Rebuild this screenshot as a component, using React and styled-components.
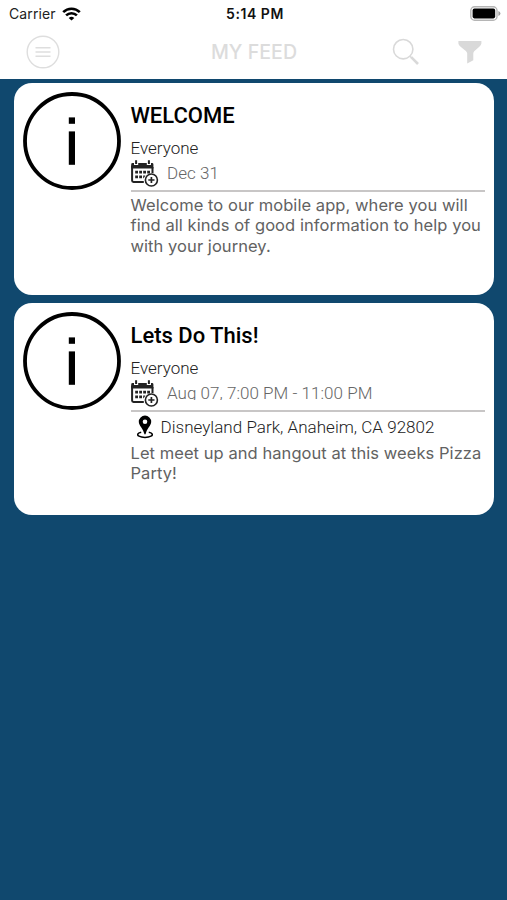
import React from "react";
import styled, { createGlobalStyle } from "styled-components";

const GlobalStyle = createGlobalStyle`
  * {
    box-sizing: border-box;
  }
  body {
    margin: 0;
    background-color: #10486e;
  }
`;

const WifiIcon = () => (
  <svg width="19" height="14" viewBox="0 0 19 14">
    <g fill="none" stroke="#000" strokeWidth="2.6">
      <path d="M1.2 5.2 A11.8 11.8 0 0 1 17.8 5.2" />
      <path d="M4.1 8.4 A7.7 7.7 0 0 1 14.9 8.4" />
    </g>
    <path d="M9.5 13.6 L6.7 10.9 A4.3 4.3 0 0 1 12.3 10.9 Z" />
  </svg>
);

const BatteryIcon = () => (
  <svg width="31" height="15" viewBox="0 0 31 15">
    <rect x="0.8" y="0.8" width="26.2" height="13.4" rx="3.8" fill="#fff" stroke="#b5b5b5" strokeWidth="1.4" />
    <rect x="2.6" y="2.6" width="22.6" height="9.8" rx="1.8" />
    <path d="M28.4 5 Q30.4 5.8 30.4 7.5 Q30.4 9.2 28.4 10 Z" fill="#9d9d9d" />
  </svg>
);

const MenuIcon = () => (
  <svg width="34" height="34" viewBox="0 0 34 34" fill="none" stroke="#dedede" strokeWidth="1.4">
    <circle cx="17" cy="17" r="15.8" />
    <path d="M9.5 12.7 H24.5 M9.5 17 H24.5 M9.5 21.3 H24.5" />
  </svg>
);

const SearchIcon = () => (
  <svg width="28" height="28" viewBox="0 0 28 28" fill="none" stroke="#d9d9d9">
    <circle cx="11.2" cy="11.2" r="9.7" strokeWidth="1.6" />
    <path d="M17.8 18 L19.5 19.7" strokeWidth="1.4" />
    <path d="M19.2 19.2 L26 26" strokeWidth="2.6" />
  </svg>
);

const FilterIcon = () => (
  <svg width="24" height="24" viewBox="0 0 24 24" fill="#d9d9d9">
    <path d="M0.4 1 H23.4 V3.6 C22.6 7.6 15.3 10.4 15.3 13.4 V20.2 L9.2 23.4 V13.4 C9.2 10.4 1.2 7.6 0.4 3.6 Z" />
  </svg>
);

const InfoIcon = () => (
  <svg width="98" height="98" viewBox="0 0 98 98">
    <circle cx="49" cy="49" r="47" fill="none" stroke="#000" strokeWidth="3.8" />
    <rect x="45.8" y="25.4" width="6.2" height="6.4" />
    <rect x="45.8" y="39.4" width="6.2" height="33.4" />
  </svg>
);

const CalendarIcon = () => (
  <svg width="28" height="29" viewBox="0 -1 28 29">
    <path d="M1.1 5.5 V20.5 Q1.1 21.9 2.5 21.9 H12.8 M21.5 7 V13" fill="none" stroke="#222" strokeWidth="2" />
    <path d="M0.2 8.4 V4.4 Q0.2 3.1 1.5 3.1 H3 V5 H7.2 V3.1 H15.8 V5 H20 V3.1 H21.1 Q22.4 3.1 22.4 4.4 V8.4 Z" fill="#222" />
    <path d="M5.1 0.2 V4 M17.9 0.2 V4" stroke="#222" strokeWidth="2" />
    <path
      d="M4.2 10.8 H7 V13.6 H4.2 Z M8.2 10.8 H11 V13.6 H8.2 Z M12.2 10.8 H15 V13.6 H12.2 Z M16.2 10.8 H19 V13.6 H16.2 Z M4.2 15.5 H7 V18.3 H4.2 Z M8.2 15.5 H11 V18.3 H8.2 Z M12.2 15.5 H14.4 L12.7 18.3 H12.2 Z"
      fill="#222"
    />
    <circle cx="20.4" cy="20" r="6" fill="#fff" stroke="#222" strokeWidth="1.6" />
    <path d="M20.4 16.9 V23.1 M17.3 20 H23.5" stroke="#222" strokeWidth="1.7" />
  </svg>
);

const PinIcon = () => (
  <svg width="16" height="24" viewBox="0 0 16 24">
    <path d="M4.2 17.2 C0 18 0 20.2 2 21.2 C5 22.8 11 22.8 14 21.2 C16 20.2 16 18 11.8 17.2" fill="none" stroke="#000" strokeWidth="1.5" />
    <path
      d="M8 0.6 A6.2 6.2 0 0 1 14.2 6.8 C14.2 10.5 9.7 14 8.8 18.6 Q8 20.4 7.2 18.6 C6.3 14 1.8 10.5 1.8 6.8 A6.2 6.2 0 0 1 8 0.6 Z M8 4.4 A2.3 2.3 0 1 0 8 9 A2.3 2.3 0 1 0 8 4.4 Z"
      fillRule="evenodd"
    />
  </svg>
);

const posts = [
  {
    title: "WELCOME",
    audience: "Everyone",
    date: "Dec 31",
    text: ["Welcome to our mobile app, where you will", "find all kinds of good information to help you", "with your journey."],
  },
  {
    title: "Lets Do This!",
    audience: "Everyone",
    date: "Aug 07, 7:00 PM - 11:00 PM",
    place: "Disneyland Park, Anaheim, CA 92802",
    text: ["Let meet up and hangout at this weeks Pizza", "Party!"],
  },
];

const Post = ({ post }) => (
  <Card>
    <InfoIcon />
    <Details>
      <Title>{post.title}</Title>
      <Audience>{post.audience}</Audience>
      <DateRow>
        <CalendarIcon />
        <DateText $clipped={Boolean(post.place)}>{post.date}</DateText>
      </DateRow>
      {post.place && (
        <PlaceRow>
          <PinIcon />
          <span>{post.place}</span>
        </PlaceRow>
      )}
      <Description $afterPlace={Boolean(post.place)}>
        {post.text.map((line) => (
          <div key={line}>{line}</div>
        ))}
      </Description>
    </Details>
  </Card>
);

export default function App() {
  return (
    <Screen>
      <GlobalStyle />
      <Header>
        <StatusBar>
          <Carrier>
            Carrier
            <WifiIcon />
          </Carrier>
          <Clock>5:14 PM</Clock>
          <Battery>
            <BatteryIcon />
          </Battery>
        </StatusBar>
        <NavBar>
          <MenuIcon />
          <Heading>MY FEED</Heading>
          <Actions>
            <SearchIcon />
            <FilterIcon />
          </Actions>
        </NavBar>
      </Header>
      <Feed>
        {posts.map((post) => (
          <Post key={post.title} post={post} />
        ))}
      </Feed>
    </Screen>
  );
}

const Screen = styled.div`
  width: 507px;
  height: 900px;
  overflow: hidden;
  background-color: #10486e;
  font-family: Roboto, sans-serif;
`;

const Header = styled.header`
  height: 79px;
  background-color: #fff;
`;

const StatusBar = styled.div`
  display: grid;
  grid-template-columns: 1fr auto 1fr;
  align-items: center;
  height: 27px;
  padding: 0 6px 0 9px;
  font-family: Inter, sans-serif;
  font-size: 14px;
  line-height: 27px;
  color: #222;
`;

const Carrier = styled.div`
  display: flex;
  align-items: center;
  gap: 6px;
  letter-spacing: 0.12px;
`;

const Clock = styled.div`
  font-weight: 600;
  letter-spacing: 0.55px;
  color: #111;
`;

const Battery = styled.div`
  display: flex;
  justify-content: flex-end;
`;

const NavBar = styled.nav`
  display: grid;
  grid-template-columns: 1fr auto 1fr;
  align-items: center;
  height: 50px;
  padding: 0 25px 0 26px;
`;

const Heading = styled.h1`
  margin: 0;
  font-family: Inter, sans-serif;
  font-size: 19.6px;
  font-weight: 500;
  color: #dcdcdc;
`;

const Actions = styled.div`
  display: flex;
  align-items: center;
  justify-content: flex-end;
  gap: 38px;
`;

const Feed = styled.main`
  display: flex;
  flex-direction: column;
  gap: 8px;
  padding: 4px 13px 0 14px;
`;

const Card = styled.article`
  display: flex;
  gap: 9.5px;
  height: 212px;
  padding: 9px 9px 0;
  border-radius: 18px;
  background-color: #fff;
`;

const Details = styled.div`
  flex: 1;
  padding-top: 9px;
`;

const Title = styled.h2`
  margin: 0;
  font-size: 22px;
  font-weight: 500;
  line-height: 30px;
  color: #000;
`;

const Audience = styled.div`
  margin-top: 6px;
  font-size: 17px;
  font-weight: 300;
  line-height: 22px;
  color: #222;
`;

const DateRow = styled.div`
  display: flex;
  gap: 8.5px;
  height: 33px;
  border-bottom: 2px solid #c8c6c6;
`;

const DateText = styled.div`
  height: ${(props) => (props.$clipped ? "17px" : "21px")};
  margin-top: 4px;
  overflow: hidden;
  font-size: 17px;
  font-weight: 300;
  line-height: 21px;
  letter-spacing: 0.03px;
  color: #666;
`;

const PlaceRow = styled.div`
  display: flex;
  align-items: center;
  gap: 8px;
  height: 30px;
  padding-left: 6px;
  font-size: 17px;
  font-weight: 300;
  letter-spacing: 0.03px;
  color: #222;
  white-space: nowrap;
`;

const Description = styled.div`
  padding-top: ${(props) => (props.$afterPlace ? "1px" : "3px")};
  font-family: Inter, sans-serif;
  font-size: 16.5px;
  line-height: 20.3px;
  letter-spacing: 0.06px;
  color: #626262;
  white-space: nowrap;
`;
